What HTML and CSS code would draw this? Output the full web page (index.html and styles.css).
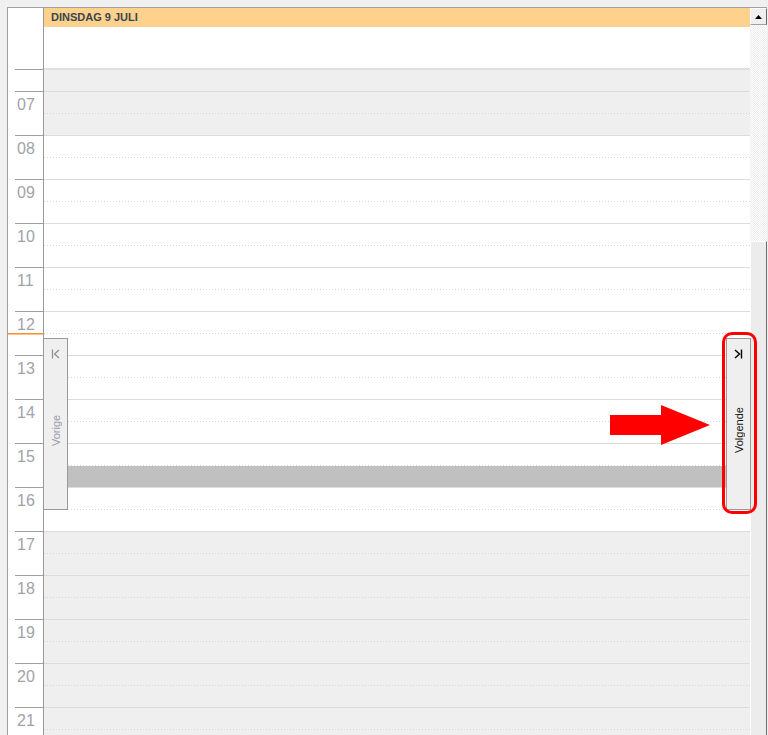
FILE: index.html
```html
<!DOCTYPE html>
<html lang="nl">
<head>
  <meta charset="UTF-8">
  <title>Agenda - Dinsdag 9 juli</title>
  <link rel="stylesheet" href="styles.css">
</head>
<body>
  <div class="scheduler">
    <div class="main">
      <div class="head">
        <div class="corner"></div>
        <div class="dayhead">
          <div class="date-bar">DINSDAG 9 JULI</div>
        </div>
      </div>

      <div class="body">
        <div class="times">
          <div class="hour first"></div>
          <div class="hour">07</div>
          <div class="hour">08</div>
          <div class="hour">09</div>
          <div class="hour">10</div>
          <div class="hour">11</div>
          <div class="hour">12</div>
          <div class="hour">13</div>
          <div class="hour">14</div>
          <div class="hour">15</div>
          <div class="hour">16</div>
          <div class="hour">17</div>
          <div class="hour">18</div>
          <div class="hour">19</div>
          <div class="hour">20</div>
          <div class="hour">21</div>
          <div class="hour">22</div>
          <div class="now-line"></div>
        </div>

        <div class="day">
          <div class="slot"></div>
          <!-- 07 -->
          <div class="slot half"></div><div class="slot"></div>
          <!-- 08 - 16 werkuren -->
          <div class="slot half work"></div><div class="slot work"></div>
          <div class="slot half work"></div><div class="slot work"></div>
          <div class="slot half work"></div><div class="slot work"></div>
          <div class="slot half work"></div><div class="slot work"></div>
          <div class="slot half work"></div><div class="slot work"></div>
          <div class="slot half work"></div><div class="slot work"></div>
          <div class="slot half work"></div><div class="slot work"></div>
          <div class="slot half work"></div><div class="slot work busy"></div>
          <div class="slot half work"></div><div class="slot work"></div>
          <!-- 17 - 22 -->
          <div class="slot half"></div><div class="slot"></div>
          <div class="slot half"></div><div class="slot"></div>
          <div class="slot half"></div><div class="slot"></div>
          <div class="slot half"></div><div class="slot"></div>
          <div class="slot half"></div><div class="slot"></div>
          <div class="slot half"></div><div class="slot"></div>
        </div>
      </div>
    </div>

    <div class="scrollbar">
      <div class="scroll-btn">
        <svg width="7" height="4" viewBox="0 0 7 4"><polygon points="3.5,0 7,4 0,4" fill="#000"/></svg>
      </div>
      <div class="scroll-track"></div>
      <div class="scroll-thumb"></div>
    </div>
  </div>

  <!-- navigatie tabs -->
  <div class="nav-tab prev">
    <svg class="nav-icon" width="9" height="10" viewBox="0 0 9 10">
      <path d="M1.5 0.5 V9.5 M8 1 L3.5 5 L8 9" stroke="#8c8c8c" stroke-width="1.2" fill="none"/>
    </svg>
    <div class="nav-label">Vorige</div>
  </div>

  <div class="nav-tab next">
    <svg class="nav-icon" width="9" height="10" viewBox="0 0 9 10">
      <path d="M7.5 0.5 V9.5 M1 1 L5.5 5 L1 9" stroke="#000" stroke-width="1.4" fill="none"/>
    </svg>
    <div class="nav-label">Volgende</div>
  </div>

  <div class="highlight"></div>

  <svg class="arrow" width="100" height="40" viewBox="0 0 100 40">
    <polygon points="0,10 51,10 51,0 100,20 51,40 51,30 0,30" fill="#ff0000"/>
  </svg>
</body>
</html>
```

FILE: styles.css
```css
body {
  margin: 0;
  background-color: #f0f0f0;
  font-family: "Liberation Sans", Arial, sans-serif;
  overflow: hidden;
  height: 735px;
}
.scheduler {
  display: flex;
  margin: 7px 0 0 7px;
  width: 760px;
  height: 728px;
  border-top: 1px solid #a0a0a0;
  border-left: 1px solid #a0a0a0;
  box-sizing: border-box;
  overflow: hidden;
}
.main {
  width: 742px;
  display: flex;
  flex-direction: column;
  overflow: hidden;
}
.head {
  display: flex;
  flex-shrink: 0;
  height: 60px;
  background-color: #fff;
}
.corner {
  width: 36px;
  border-right: 1px solid #999;
  box-sizing: border-box;
}
.dayhead {
  flex: 1;
}
.date-bar {
  height: 19px;
  line-height: 19px;
  padding-left: 7px;
  background-color: #fed28c;
  color: #3a4450;
  font-size: 11px;
  font-weight: bold;
}
.body {
  display: flex;
  flex: 1;
  min-height: 0;
  overflow: hidden;
}
.times {
  position: relative;
  width: 36px;
  flex-shrink: 0;
  padding-top: 1px;
  border-right: 1px solid #999;
  box-sizing: border-box;
  background-color: #fff;
}
.hour {
  height: 44px;
  margin-left: 7px;
  padding: 4px 0 0 2px;
  border-top: 1px solid #a0a0a0;
  box-sizing: border-box;
  font-size: 16px;
  line-height: 18px;
  color: #a0a3aa;
}
.hour.first {
  height: 22px;
}
.now-line {
  position: absolute;
  left: 0;
  right: 0;
  top: 265px;
  height: 1px;
  border-top: 1px solid #fb8f24;
  background-color: #fcc48c;
}
.day {
  flex: 1;
  border-top: 2px solid #e0e0e0;
}
.slot {
  height: 22px;
  box-sizing: border-box;
  border-bottom: 1px solid #dcdcdc;
  background-color: #efefef;
}
.slot.half {
  border-bottom: none;
  background-image: linear-gradient(to right, #d6d6d6 1px, transparent 1px);
  background-size: 3px 1px;
  background-repeat: repeat-x;
  background-position: 0 bottom;
}
.slot.work {
  background-color: #fff;
}
.slot.busy {
  background-color: #c0c0c0;
}
.scrollbar {
  width: 17px;
  display: flex;
  flex-direction: column;
}
.scroll-btn {
  height: 17px;
  flex-shrink: 0;
  display: flex;
  align-items: center;
  justify-content: center;
  background-color: #f0f0f0;
  border-top: 1px solid #fff;
  border-left: 1px solid #fff;
  border-right: 1px solid #696969;
  border-bottom: 1px solid #a0a0a0;
  box-sizing: border-box;
}
.scroll-track {
  height: 216px;
  flex-shrink: 0;
  background: repeating-conic-gradient(#fff 0 25%, #ececec 0 50%) 0 0 / 2px 2px;
}
.scroll-thumb {
  flex: 1;
  background-color: #ececec;
  border-left: 1px solid #fff;
  border-top: 1px solid #fff;
  border-right: 1px solid #6e6e6e;
}
.nav-tab {
  position: absolute;
  top: 338px;
  width: 25px;
  height: 172px;
  display: flex;
  flex-direction: column;
  align-items: center;
  background-color: #efefef;
  border: 1px solid #999;
  box-sizing: border-box;
}
.nav-tab.prev {
  left: 43px;
  color: #9a9aac;
}
.nav-tab.next {
  left: 726px;
  color: #111;
}
.nav-icon {
  margin-top: 10px;
}
/* rotated 180deg: padding-top ends up at the visual bottom */
.nav-label {
  flex: 1;
  display: flex;
  align-items: center;
  justify-content: center;
  padding-top: 8px;
  writing-mode: vertical-rl;
  transform: rotate(180deg);
  font-size: 11px;
}
.highlight {
  position: absolute;
  left: 722px;
  top: 332px;
  width: 35px;
  height: 182px;
  border: 3px solid #ff0000;
  border-radius: 10px;
  box-sizing: border-box;
}
.arrow {
  position: absolute;
  left: 610px;
  top: 405px;
}
```
